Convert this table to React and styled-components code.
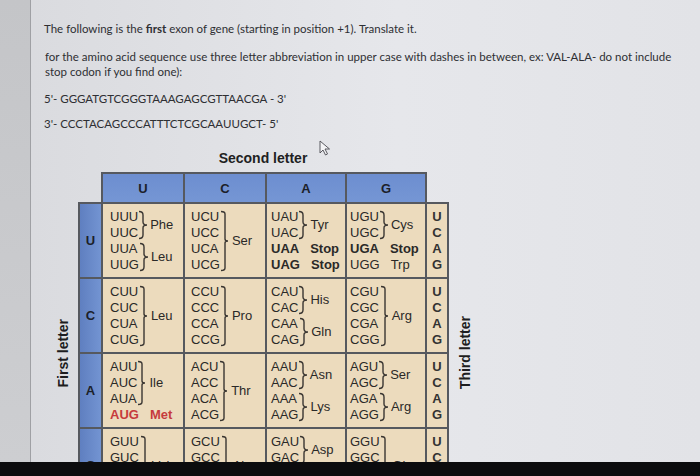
import React from "react";
import styled, { createGlobalStyle } from "styled-components";

const GlobalStyle = createGlobalStyle`
  html, body { margin: 0; padding: 0; }
  body { width: 700px; height: 476px; overflow: hidden; background: #e2e3e7; }
`;

const BASES = ["U", "C", "A", "G"];

// each cell: list of groups { codons, label, bold, red }
const TABLE = {
  U: [
    [{ codons: ["UUU", "UUC"], label: "Phe" }, { codons: ["UUA", "UUG"], label: "Leu" }],
    [{ codons: ["UCU", "UCC", "UCA", "UCG"], label: "Ser" }],
    [
      { codons: ["UAU", "UAC"], label: "Tyr" },
      { codons: ["UAA"], label: "Stop", bold: true },
      { codons: ["UAG"], label: "Stop", bold: true },
    ],
    [
      { codons: ["UGU", "UGC"], label: "Cys" },
      { codons: ["UGA"], label: "Stop", bold: true },
      { codons: ["UGG"], label: "Trp" },
    ],
  ],
  C: [
    [{ codons: ["CUU", "CUC", "CUA", "CUG"], label: "Leu" }],
    [{ codons: ["CCU", "CCC", "CCA", "CCG"], label: "Pro" }],
    [{ codons: ["CAU", "CAC"], label: "His" }, { codons: ["CAA", "CAG"], label: "Gln" }],
    [{ codons: ["CGU", "CGC", "CGA", "CGG"], label: "Arg" }],
  ],
  A: [
    [{ codons: ["AUU", "AUC", "AUA"], label: "Ile" }, { codons: ["AUG"], label: "Met", red: true, bold: true }],
    [{ codons: ["ACU", "ACC", "ACA", "ACG"], label: "Thr" }],
    [{ codons: ["AAU", "AAC"], label: "Asn" }, { codons: ["AAA", "AAG"], label: "Lys" }],
    [{ codons: ["AGU", "AGC"], label: "Ser" }, { codons: ["AGA", "AGG"], label: "Arg" }],
  ],
  G: [
    [{ codons: ["GUU", "GUC", "GUA", "GUG"], label: "Val" }],
    [{ codons: ["GCU", "GCC", "GCA", "GCG"], label: "Ala" }],
    [{ codons: ["GAU", "GAC"], label: "Asp" }, { codons: ["GAA", "GAG"], label: "Glu" }],
    [{ codons: ["GGU", "GGC", "GGA", "GGG"], label: "Gly" }],
  ],
};

const LINE = 16;
const COL_W = [23, 82, 82, 80, 80, 22];
const PAD_L = [7, 6, 4, 3];

const Screen = styled.div`
  width: 700px;
  height: 476px;
  display: flex;
  flex-direction: column;
  overflow: hidden;
`;

const Main = styled.div`
  flex: 1;
  min-height: 0;
  display: flex;
  overflow: hidden;
`;

const SideStrip = styled.div`
  width: 30px;
  flex-shrink: 0;
  background: linear-gradient(180deg, #c4c5c8, #cdced1);
  border-right: 1px solid #9fa0a4;
`;

const Page = styled.div`
  flex: 1;
  position: relative;
  padding: 21px 0 0 13px;
  background: linear-gradient(90deg, #dadbdf 0%, #e6e7eb 55%, #e2e3e7 100%);
  font-family: Lato, "Open Sans", sans-serif;
  color: #2e2f33;
`;

const BottomBar = styled.div`
  height: 14px;
  flex-shrink: 0;
  background: #0c0c0e;
`;

const Para = styled.p`
  margin: 0 0 ${(p) => p.$gap}px;
  font-size: 11.5px;
  line-height: 15px;
  max-width: 634px;
  padding-left: ${(p) => p.$indent || 0}px;
`;

const Title = styled.div`
  margin: 19px 0 6px;
  width: 438px;
  text-align: center;
  font-family: "Liberation Sans", Arial, sans-serif;
  font-weight: bold;
  font-size: 14px;
  line-height: 16px;
  color: #1f1f22;
`;

const TableArea = styled.div`
  display: flex;
  align-items: flex-start;
`;

const SideLabel = styled.div`
  width: ${(p) => p.$w}px;
  flex-shrink: 0;
  align-self: stretch;
  display: flex;
  align-items: center;
  justify-content: center;
  padding: 30px 0 0 ${(p) => p.$pl || 0}px;
  box-sizing: border-box;

  span {
    writing-mode: vertical-rl;
    transform: rotate(180deg);
    font-family: "Liberation Sans", Arial, sans-serif;
    font-weight: bold;
    font-size: 14px;
    color: #1d1d20;
  }
`;

const Codons = styled.table`
  border-collapse: collapse;
  table-layout: fixed;
  width: 369px;
  flex-shrink: 0;
  font-family: "Liberation Sans", Arial, sans-serif;
  font-size: 13px;
  color: #2a2928;
`;

const Col = styled.col`
  width: ${(p) => p.$w}px;
`;

const HeadCell = styled.th`
  height: 28px;
  padding: 0;
  background: linear-gradient(180deg, #6d8ed0, #7596d4);
  border: 2px solid #56595f;
  font-weight: bold;
  font-size: 13px;
  color: #1c1f29;
  text-align: center;
`;

const Blank = styled.th`
  padding: 0;
  border: none;
`;

const FirstCell = styled.td`
  padding: 0;
  background: linear-gradient(90deg, #5f7fc0, #7394d2);
  border: 2px solid #56595f;
  text-align: center;
  font-weight: bold;
  color: #1c1f29;
`;

const Cell = styled.td`
  height: 64px;
  padding: 5px 0 4px ${(p) => p.$pl}px;
  vertical-align: top;
  background: #ecdbbd;
  border: 2px solid #56595f;
  overflow: hidden;
  white-space: nowrap;
`;

const ThirdCell = styled.td`
  padding: 5px 0 4px;
  vertical-align: top;
  background: #ecdbbd;
  border: 2px solid #56595f;
  text-align: center;
  font-weight: bold;
  line-height: ${LINE}px;
  color: #333;
`;

const Group = styled.div`
  display: flex;
  align-items: center;
`;

const CodonStack = styled.div`
  display: flex;
  flex-direction: column;
  line-height: ${LINE}px;
  font-weight: ${(p) => (p.$bold ? "bold" : "normal")};
  color: ${(p) => (p.$red ? "#c63a3c" : "inherit")};
`;

const AminoLabel = styled.span`
  margin-left: ${(p) => p.$gap}px;
  line-height: ${LINE}px;
  font-weight: ${(p) => (p.$bold ? "bold" : "normal")};
  color: ${(p) => (p.$red ? "#c63a3c" : "inherit")};
`;

const Cursor = styled.svg`
  position: absolute;
  left: 288px;
  top: 140px;
`;

function Brace({ lines }) {
  const h = lines * LINE - 2;
  const m = h / 2;
  const d =
    lines === 2
      ? `M1 1.5 Q5 1.5 5 5 L5 ${m - 3} Q5 ${m} 9 ${m} Q5 ${m} 5 ${m + 3} L5 ${h - 5} Q5 ${h - 1.5} 1 ${h - 1.5}`
      : `M1 1.5 Q5 1.5 5 4 L5 ${m - 2} Q5 ${m} 8 ${m} Q5 ${m} 5 ${m + 2} L5 ${h - 4} Q5 ${h - 1.5} 1 ${h - 1.5}`;
  return (
    <svg width="10" height={h} viewBox={`0 0 10 ${h}`}>
      <path d={d} fill="none" stroke="#3a3632" strokeWidth="1.4" />
    </svg>
  );
}

function CodonGroup({ group }) {
  const single = group.codons.length === 1;
  return (
    <Group>
      <CodonStack $bold={group.bold} $red={group.red}>
        {group.codons.map((c) => (
          <span key={c}>{c}</span>
        ))}
      </CodonStack>
      {!single && <Brace lines={group.codons.length} />}
      <AminoLabel $gap={single ? 11 : 2} $bold={group.bold} $red={group.red}>
        {group.label}
      </AminoLabel>
    </Group>
  );
}

function CodonTable() {
  return (
    <Codons>
      <colgroup>
        {COL_W.map((w, i) => (
          <Col key={i} $w={w} />
        ))}
      </colgroup>
      <thead>
        <tr>
          <Blank />
          {BASES.map((b) => (
            <HeadCell key={b}>{b}</HeadCell>
          ))}
          <Blank />
        </tr>
      </thead>
      <tbody>
        {BASES.map((first) => (
          <tr key={first}>
            <FirstCell>{first}</FirstCell>
            {TABLE[first].map((groups, i) => (
              <Cell key={i} $pl={PAD_L[i]}>
                {groups.map((g) => (
                  <CodonGroup key={g.codons[0]} group={g} />
                ))}
              </Cell>
            ))}
            <ThirdCell>
              {BASES.map((b) => (
                <div key={b}>{b}</div>
              ))}
            </ThirdCell>
          </tr>
        ))}
      </tbody>
    </Codons>
  );
}

export default function App() {
  return (
    <Screen>
      <GlobalStyle />
      <Main>
        <SideStrip />
        <Page>
          <Para $gap={13}>
            The following is the <b>first</b> exon of gene (starting in position +1). Translate it.
          </Para>
          <Para $gap={12} $indent={1}>
            for the amino acid sequence use three letter abbreviation in upper case with dashes in between, ex: VAL-ALA- do not include stop codon if you find one):
          </Para>
          <Para $gap={10}>5'- GGGATGTCGGGTAAAGAGCGTTAACGA - 3'</Para>
          <Para $gap={0}>3'- CCCTACAGCCCATTTCTCGCAAUUGCT- 5'</Para>
          <Title>Second letter</Title>
          <TableArea>
            <SideLabel $w={34} $pl={4}>
              <span>First letter</span>
            </SideLabel>
            <CodonTable />
            <SideLabel $w={32}>
              <span>Third letter</span>
            </SideLabel>
          </TableArea>
          <Cursor width="12" height="16" viewBox="0 0 12 16">
            <path d="M1 1 L1 13 L4 10 L6.5 15 L8.5 14 L6 9 L10.5 9 Z" fill="#f4f4f6" stroke="#4a4a50" strokeWidth="0.9" strokeLinejoin="round" />
          </Cursor>
        </Page>
      </Main>
      <BottomBar />
    </Screen>
  );
}
